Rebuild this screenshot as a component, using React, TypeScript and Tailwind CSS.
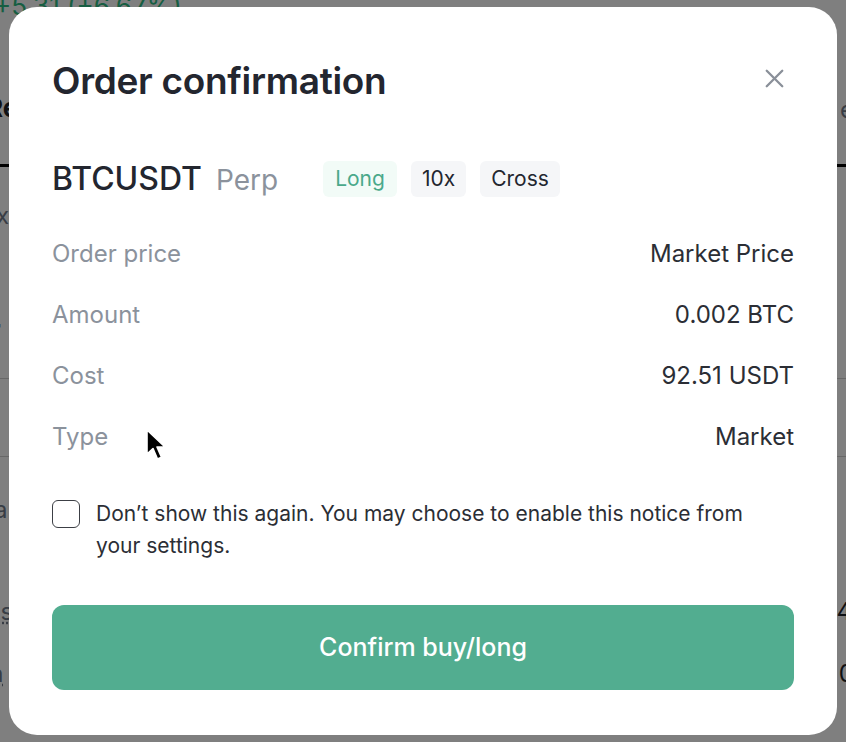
import { X } from 'lucide-react'

const rows = [
  { label: 'Order price', value: 'Market Price' },
  { label: 'Amount', value: '0.002 BTC' },
  { label: 'Cost', value: '92.51 USDT' },
  { label: 'Type', value: 'Market' },
]

function Backdrop() {
  // faint trading page behind the dialog
  return (
    <div className="absolute inset-0 bg-white text-[#1e2329]">
      <div className="absolute -top-[14px] left-[-6px] text-[26px] text-[#2ebd85]">+5.31 (+6.67%)</div>
      <div className="absolute left-[-14px] top-[88px] text-[26px] font-bold">Rev</div>
      <div className="absolute right-[-8px] top-[92px] text-[24px] text-[#707a8a]">e</div>
      <div className="absolute left-0 right-0 top-[164px] h-[3px] bg-black" />
      <div className="absolute left-[-4px] top-[198px] text-[24px] text-[#707a8a]">x</div>
      <div className="absolute left-[-10px] top-[310px] text-[26px] font-bold">r</div>
      <div className="absolute left-0 right-0 top-[378px] h-px bg-[#d0d0d0]" />
      <div className="absolute left-0 right-0 top-[456px] h-px bg-[#d0d0d0]" />
      <div className="absolute left-[-6px] top-[492px] text-[24px] text-[#707a8a]">a</div>
      <div className="absolute left-[-14px] top-[594px] text-[24px] text-[#707a8a] underline decoration-dotted">os</div>
      <div className="absolute right-[-6px] top-[594px] text-[24px]">4</div>
      <div className="absolute left-[-10px] top-[656px] text-[24px] text-[#707a8a] underline decoration-dotted">a</div>
      <div className="absolute right-[-8px] top-[656px] text-[24px]">0</div>
    </div>
  )
}

export default function App() {
  return (
    <div
      className="relative h-[742px] w-[846px] overflow-hidden"
      style={{ fontFamily: 'Inter, "Noto Sans", sans-serif' }}
    >
      <Backdrop />
      <div className="absolute inset-0 flex items-center justify-center bg-black/50">
        <div className="flex h-[728px] w-[828px] flex-col rounded-[28px] bg-white px-[43px] pt-[54px]">
          {/* Header */}
          <div className="flex h-[40px] items-center justify-between">
            <h2 className="text-[37px] font-semibold tracking-[-0.3px] text-[#23262f]">Order confirmation</h2>
            <button className="mb-[6px] mr-[4px] text-[#8a9099]">
              <X size={31} strokeWidth={1.8} />
            </button>
          </div>

          {/* Symbol + tags */}
          <div className="mt-[60px] flex h-[36px] items-center">
            <span className="text-[32px] font-medium text-[#23262f]">BTCUSDT</span>
            <span className="ml-[14px] mt-[2px] text-[28px] text-[#8b929c]">Perp</span>
            <div className="ml-[45px] flex gap-[14px]">
              <span className="flex h-[36px] items-center rounded-[6px] bg-[#f2fbf7] px-[12px] text-[21px] text-[#4aa98a]">Long</span>
              <span className="flex h-[36px] items-center rounded-[6px] bg-[#f5f6f8] px-[11px] text-[21px] text-[#23262f]">10x</span>
              <span className="flex h-[36px] items-center rounded-[6px] bg-[#f5f6f8] px-[11px] text-[21px] text-[#23262f]">Cross</span>
            </div>
          </div>

          {/* Details */}
          <div className="mt-[26px] flex flex-col">
            {rows.map((r) => (
              <div key={r.label} className="flex h-[61px] items-center justify-between text-[24px]">
                <span className="text-[#8b929c]">{r.label}</span>
                <span className="text-[#2b2e35]">{r.value}</span>
              </div>
            ))}
          </div>

          {/* Checkbox */}
          <label className="mt-[31px] flex items-start gap-[16px]">
            <span className="mt-[2px] h-[28px] w-[28px] shrink-0 rounded-[6px] border-[1.5px] border-[#3c3f45] bg-white" />
            <span className="max-w-[665px] text-[21px] leading-[32px] text-[#2b2e35]">
              Don’t show this again. You may choose to enable this notice from your settings.
            </span>
          </label>

          {/* Confirm */}
          <button className="mt-[43px] flex h-[85px] w-full items-center justify-center rounded-[12px] bg-[#52ad90] text-[25px] font-medium text-white">
            Confirm buy/long
          </button>
        </div>
      </div>

      {/* mouse cursor */}
      <svg className="absolute left-[145px] top-[428px]" width="22" height="34" viewBox="0 0 22 34">
        <path d="M2 2 L2 26 L8 20.5 L12.5 31 L16.5 29.3 L12 19 L20 19 Z" fill="#000" stroke="#fff" strokeWidth="1.6" strokeLinejoin="round" />
      </svg>
    </div>
  )
}
